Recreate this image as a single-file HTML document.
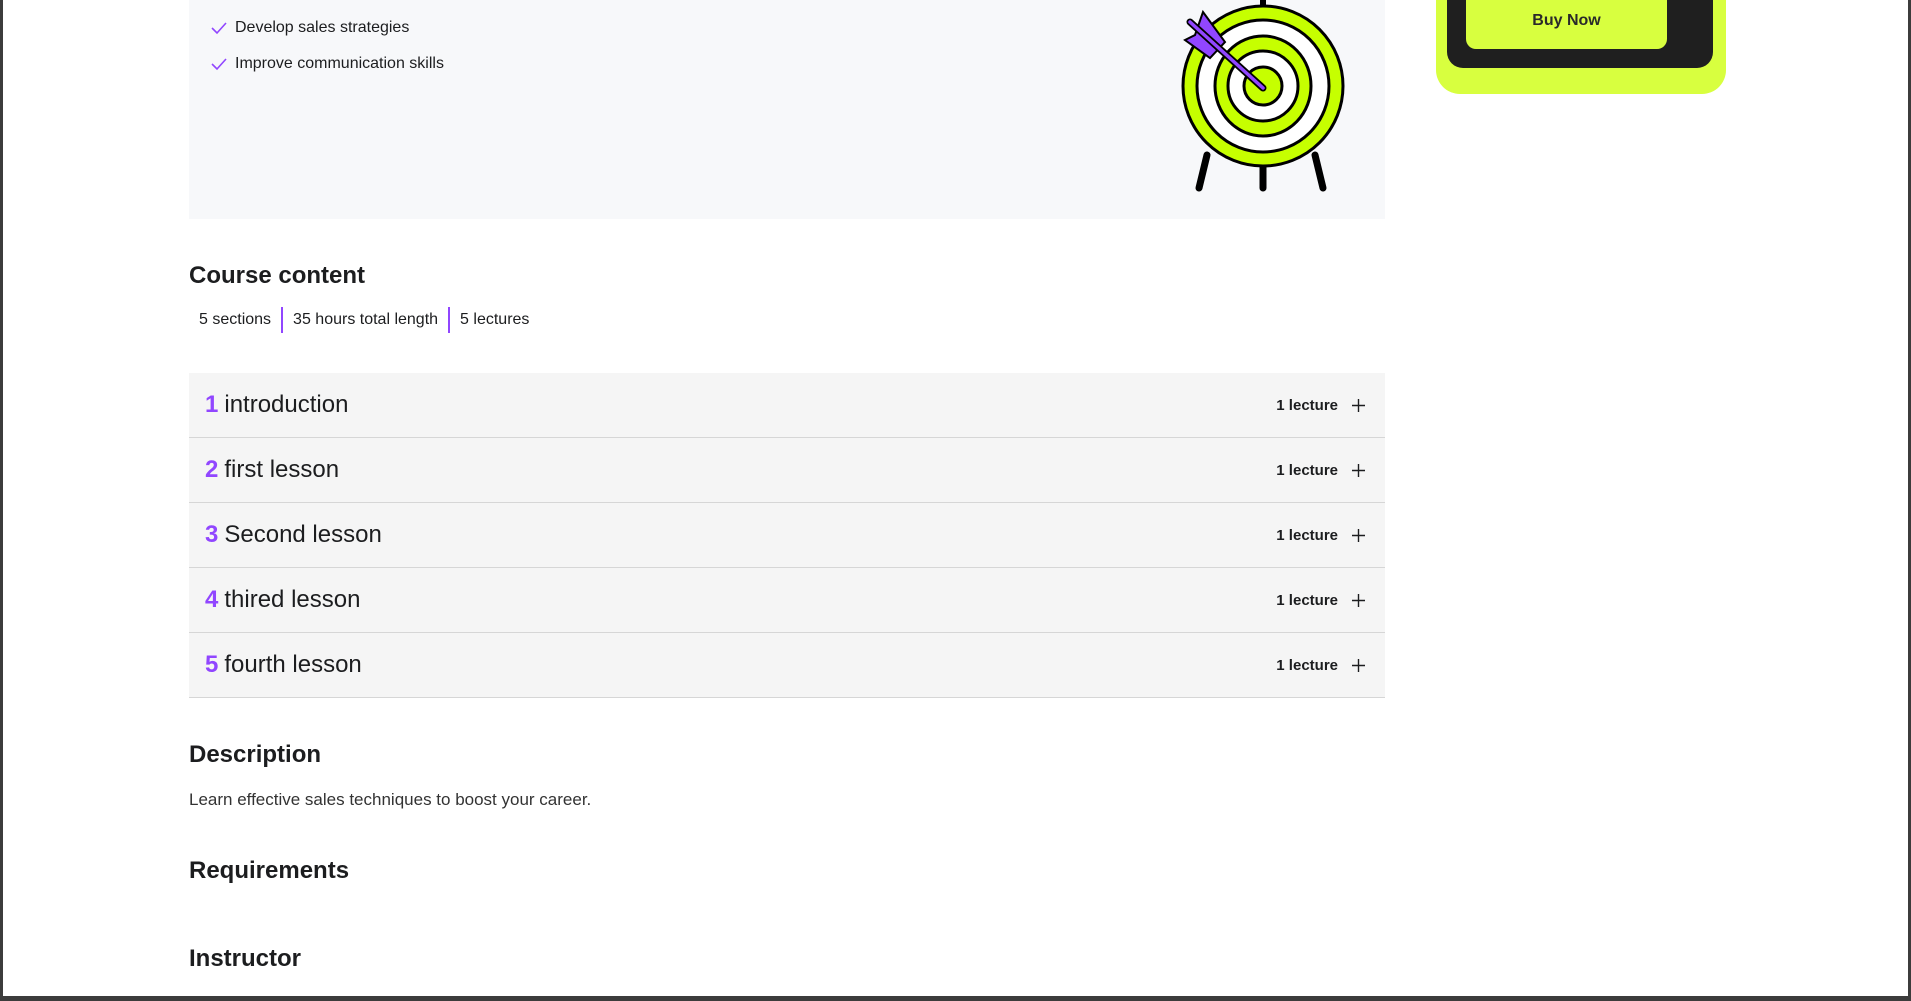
<!DOCTYPE html>
<html><head><meta charset="utf-8"><style>
*{margin:0;padding:0;box-sizing:border-box}
body{width:1911px;height:1001px;overflow:hidden;background:#fff;font-family:"Liberation Sans",sans-serif;color:#1c1d1f;position:relative}
.frameL{position:absolute;left:0;top:0;width:3px;height:1001px;background:#3c3c3c}
.frameR{position:absolute;right:0;top:0;width:3px;height:1001px;background:#3c3c3c}
.frameB{position:absolute;left:0;bottom:0;width:1911px;height:5px;background:#3c3c3c}
.box{position:absolute;left:189px;top:0;width:1196px;height:219px;background:#f7f8fa}
.chk{position:absolute;left:210px;font-size:16px;color:#1c1d1f}
.chk svg{position:absolute;left:0;top:2px}
.chk span{position:absolute;left:25px;top:0;white-space:nowrap}
.card{position:absolute;left:1436px;top:-40px;width:290px;height:134px;background:#d8ff3f;border-radius:0 0 24px 24px}
.inner{position:absolute;left:11px;top:0;width:266px;height:108px;background:#1f1f1f;border-radius:0 0 16px 16px}
.btn{position:absolute;left:19px;top:0;width:201px;height:89px;background:#d8ff3f;border-radius:0 0 10px 10px;font-weight:bold;font-size:16px;color:#2a2a2a;text-align:center;padding-top:52px}
h2{position:absolute;left:189px;font-size:24px;font-weight:bold;color:#1c1d1f}
.stats{position:absolute;left:189px;top:306px;height:28px;display:flex;align-items:center;font-size:16px}
.stats span{padding:0 10px}
.stats i{display:block;width:2px;height:26px;background:#9146ff}
.acc{position:absolute;left:189px;top:373px;width:1196px}
.row{height:65px;background:#f5f5f5;border-bottom:1px solid #d6d6d6;display:flex;align-items:center;padding:0 20px 0 16px;position:relative}
.row .n{color:#9146ff;font-size:24px;margin-right:6px;font-weight:bold}
.row .t{font-size:24px;color:#1c1d1f}
.row .r{position:absolute;right:20px;top:0;height:65px;display:flex;align-items:center;font-size:15px;font-weight:bold}
.row .r svg{margin-left:14px}
.desc{position:absolute;left:189px;top:790px;font-size:17px;color:#333}
</style></head><body>
<div class="box"></div>
<div class="chk" style="top:19px"><svg width="18" height="14" viewBox="0 0 18 14"><path d="M2 7l5 5L16 2" fill="none" stroke="#9146ff" stroke-width="1.6"/></svg><span>Develop sales strategies</span></div>
<div class="chk" style="top:55px"><svg width="18" height="14" viewBox="0 0 18 14"><path d="M2 7l5 5L16 2" fill="none" stroke="#9146ff" stroke-width="1.6"/></svg><span>Improve communication skills</span></div>
<svg style="position:absolute;left:1165px;top:0" width="190" height="200" viewBox="0 0 190 200">
<line x1="98" y1="0" x2="98" y2="10" stroke="#000" stroke-width="6"/>
<line x1="42" y1="155" x2="34" y2="188" stroke="#000" stroke-width="7" stroke-linecap="round"/>
<line x1="98" y1="160" x2="98" y2="188" stroke="#000" stroke-width="7" stroke-linecap="round"/>
<line x1="150" y1="155" x2="158" y2="188" stroke="#000" stroke-width="7" stroke-linecap="round"/>
<ellipse cx="98" cy="86" rx="80" ry="80" fill="#c6ff00" stroke="#000" stroke-width="3"/>
<ellipse cx="98" cy="86" rx="66" ry="66" fill="#fff" stroke="#000" stroke-width="3"/>
<ellipse cx="98" cy="86" rx="48" ry="50" fill="#c6ff00" stroke="#000" stroke-width="3"/>
<ellipse cx="98" cy="86" rx="35" ry="35" fill="#fff" stroke="#000" stroke-width="3"/>
<ellipse cx="98" cy="86" rx="19" ry="19" fill="#c6ff00" stroke="#000" stroke-width="3"/>
<polygon points="38,12 60,42 45,58 20,40 30,35" fill="#9146ff" stroke="#000" stroke-width="2"/>
<line x1="25" y1="22" x2="98" y2="88" stroke="#000" stroke-width="7" stroke-linecap="round"/>
<line x1="25" y1="22" x2="98" y2="88" stroke="#9146ff" stroke-width="3.5" stroke-linecap="round"/>
</svg>
<div class="card"><div class="inner"><div class="btn">Buy Now</div></div></div>
<h2 style="top:262px">Course content</h2>
<div class="stats"><span>5 sections</span><i></i><span>35 hours total length</span><i></i><span>5 lectures</span></div>
<div class="acc">
<div class="row"><span class="n">1</span><span class="t">introduction</span><div class="r">1 lecture<svg width="13" height="13"><path d="M6.5 0v13M0 6.5h13" stroke="#1c1d1f" stroke-width="1.4"/></svg></div></div>
<div class="row"><span class="n">2</span><span class="t">first lesson</span><div class="r">1 lecture<svg width="13" height="13"><path d="M6.5 0v13M0 6.5h13" stroke="#1c1d1f" stroke-width="1.4"/></svg></div></div>
<div class="row"><span class="n">3</span><span class="t">Second lesson</span><div class="r">1 lecture<svg width="13" height="13"><path d="M6.5 0v13M0 6.5h13" stroke="#1c1d1f" stroke-width="1.4"/></svg></div></div>
<div class="row"><span class="n">4</span><span class="t">thired lesson</span><div class="r">1 lecture<svg width="13" height="13"><path d="M6.5 0v13M0 6.5h13" stroke="#1c1d1f" stroke-width="1.4"/></svg></div></div>
<div class="row"><span class="n">5</span><span class="t">fourth lesson</span><div class="r">1 lecture<svg width="13" height="13"><path d="M6.5 0v13M0 6.5h13" stroke="#1c1d1f" stroke-width="1.4"/></svg></div></div>
</div>
<h2 style="top:741px">Description</h2>
<div class="desc">Learn effective sales techniques to boost your career.</div>
<h2 style="top:857px">Requirements</h2>
<h2 style="top:945px">Instructor</h2>
<div class="frameL"></div><div class="frameR"></div><div class="frameB"></div>
</body></html>
